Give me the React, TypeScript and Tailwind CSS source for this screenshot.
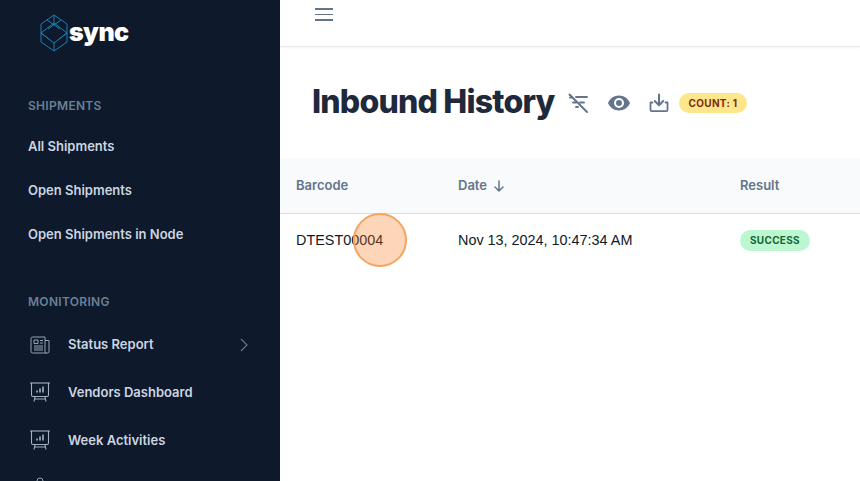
import React from "react";

const Logo = () => (
  <svg width="28" height="38" viewBox="0 0 28 38" fill="none" stroke="#1f7fb0" strokeWidth="1" strokeLinejoin="round">
    <path d="M14 1 L27 10 L27 28 L14 37 L1 28 L1 10 Z" />
    <path d="M14 9 L27 19 L14 29 L1 19 Z" />
    <path d="M14 1 V9 M14 29 V37" />
    <path d="M7 6 L20 15 M21 6 L8 15 M1 19 L9 25 M27 19 L19 25" />
  </svg>
);

const Report = () => (
  <svg width="20" height="18" viewBox="0 0 20 18" fill="none" stroke="#94a3b8" strokeWidth="1" strokeLinejoin="round">
    <path d="M15 1 H2.5 A1.5 1.5 0 0 0 1 2.5 V15.5 A1.5 1.5 0 0 0 2.5 17 H17.5 A1.5 1.5 0 0 0 19 15.5 V4.5 H15 Z" />
    <path d="M15 4.5 V15.5 A1.5 1.5 0 0 0 16.5 17" />
    <rect x="4" y="4" width="4" height="3.5" />
    <path d="M10 4.5 H13 M10 7 H13 M4 10 H13 M4 12 H13 M4 14 H13" />
  </svg>
);

const Presentation = () => (
  <svg width="20" height="20" viewBox="0 0 20 20" fill="none" stroke="#a3b1c4" strokeWidth="1.1" strokeLinejoin="round">
    <path d="M0 1 H20" />
    <path d="M1.5 1 V13 A1.5 1.5 0 0 0 3 14.5 H17 A1.5 1.5 0 0 0 18.5 13 V1" />
    <path d="M7 10.5 V8.5 M10 10.5 V6.5 M13 10.5 V4.5" strokeWidth="1.6" />
    <path d="M5 14.5 L4 19.5 M15 14.5 L16 19.5 M4.5 17 H15.5" />
  </svg>
);

const FilterOff = () => (
  <svg width="22" height="22" viewBox="0 0 22 22" fill="none" stroke="#64748b" strokeWidth="2" strokeLinecap="round">
    <path d="M2.5 2.5 L20 20" />
    <path d="M9 5 H20 M3 5.5 H5 M6 10.5 H9 M13 10.5 H17 M9 15 H11" strokeWidth="1.9" />
  </svg>
);

const Eye = () => (
  <svg width="24" height="24" viewBox="0 0 24 24" fill="#64748b">
    <path
      fillRule="evenodd"
      d="M12 4.5 C7 4.5 2.7 7.6 1 12 c1.7 4.4 6 7.5 11 7.5 s9.3-3.1 11-7.5 C21.3 7.6 17 4.5 12 4.5 Z M12 17 a5 5 0 1 1 0-10 a5 5 0 0 1 0 10 Z M12 9 a3 3 0 1 0 0 6 a3 3 0 0 0 0-6 Z"
    />
  </svg>
);

const Download = () => (
  <svg width="20" height="20" viewBox="0 0 20 20" fill="none" stroke="#64748b" strokeWidth="2" strokeLinecap="round" strokeLinejoin="round">
    <path d="M10 1.5 V12 M5.8 8 L10 12.2 L14.2 8" />
    <path d="M1.5 13 V17 A1.2 1.2 0 0 0 2.7 18.2 H17.3 A1.2 1.2 0 0 0 18.5 17 V13 M1.5 9.5 V13 M18.5 9.5 V13 M1.5 9.5 H3.5 M16.5 9.5 H18.5" strokeWidth="1.8" />
  </svg>
);

const Sidebar = () => (
  <aside className="w-[280px] shrink-0 h-full bg-[#0e192b] overflow-hidden text-[#cbd5e1] text-[13px] font-semibold">
    <div className="h-[86px] pl-[40px] pt-[14px] flex items-start gap-[1px]">
      <Logo />
      <span className="text-white font-black text-[25px] leading-[36px] tracking-[-0.6px]">sync</span>
    </div>
    <div className="h-[39px] pl-7 flex items-center text-xs tracking-wide text-[#6b8096]">SHIPMENTS</div>
    <ul>
      {["All Shipments", "Open Shipments", "Open Shipments in Node"].map((t) => (
        <li key={t} className="h-11 pl-7 flex items-center">{t}</li>
      ))}
    </ul>
    <div className="h-[38px] mt-[26px] pl-7 flex items-center text-xs tracking-wide text-[#6b8096]">MONITORING</div>
    <ul>
      <li className="h-12 pl-[30px] pr-[32px] flex items-center">
        <span className="w-[38px]"><Report /></span>
        <span>Status Report</span>
        <svg className="ml-auto" width="8" height="14" viewBox="0 0 8 14" fill="none" stroke="#64748b" strokeWidth="1.2"><path d="M1 1 L7 7 L1 13" /></svg>
      </li>
      {["Vendors Dashboard", "Week Activities"].map((t) => (
        <li key={t} className="h-12 pl-[30px] flex items-center">
          <span className="w-[38px] -mt-[2px]"><Presentation /></span>
          <span>{t}</span>
        </li>
      ))}
      <li className="h-12 pl-[30px] flex items-start">
        <svg className="mt-[10px]" width="20" height="20" viewBox="0 0 20 20" fill="none" stroke="#94a3b8" strokeWidth="1"><circle cx="10" cy="6" r="3" /><path d="M3 18 C3 13 17 13 17 18" /></svg>
      </li>
    </ul>
  </aside>
);

export default function App() {
  return (
    <div className="relative flex w-[860px] h-[481px] overflow-hidden bg-white font-['Inter',sans-serif]">
      <Sidebar />
      <main className="flex-1 min-w-0 flex flex-col">
        <header className="h-[47px] shrink-0 pl-[35px] pt-[8px] border-b border-[#e5e7eb] shadow-[0_1px_2px_rgba(0,0,0,0.04)]">
          <div className="w-[18px] flex flex-col gap-[4px]">
            <span className="h-[1.5px] bg-[#64748b]" />
            <span className="h-[1.5px] bg-[#64748b]" />
            <span className="h-[1.5px] bg-[#64748b]" />
          </div>
        </header>
        <div className="h-[111px] shrink-0 pl-[32px] pt-[33px] flex items-start">
          <h1 className="text-[32px] leading-[44px] font-extrabold tracking-[-0.8px] text-[#1e293b] whitespace-nowrap">Inbound History</h1>
          <div className="ml-[12px] mt-[11px] flex items-center">
            <span className="w-[22px]"><FilterOff /></span>
            <span className="ml-[18px] w-[24px]"><Eye /></span>
            <span className="ml-[18px] w-[20px]"><Download /></span>
            <span className="ml-[10px] h-[20px] px-[10px] rounded-full bg-[#fde78a] text-[#7c2d12] text-[10px] font-bold tracking-[0.3px] flex items-center whitespace-nowrap">COUNT: 1</span>
          </div>
        </div>
        <div className="h-[56px] shrink-0 bg-[#f8fafc] border-b border-[#d9dee5] flex items-center text-[#64748b] text-[13px] font-semibold">
          <div className="w-[178px] pl-4">Barcode</div>
          <div className="w-[282px] flex items-center gap-[5px]">
            Date
            <svg width="14" height="14" viewBox="0 0 14 14" fill="none" stroke="#64748b" strokeWidth="1.5" strokeLinecap="round" strokeLinejoin="round"><path d="M7 2 V12 M3 8 L7 12 L11 8" /></svg>
          </div>
          <div>Result</div>
        </div>
        <div className="h-[52px] flex items-center text-[14.4px] text-[#111827] font-['Liberation_Sans',sans-serif]">
          <div className="w-[178px] pl-4 pt-[1px]">DTEST00004</div>
          <div className="w-[282px] pt-[1px] whitespace-nowrap">Nov 13, 2024, 10:47:34 AM</div>
          <span className="h-[21px] px-[10px] rounded-full bg-[#bbf7d0] text-[#166534] text-[10px] font-bold tracking-[0.3px] flex items-center font-['Inter',sans-serif]">SUCCESS</span>
        </div>
      </main>
      <div className="absolute left-[353px] top-[213px] w-[54px] h-[54px] rounded-full bg-[#f97316]/30 border-2 border-[#f4a460]" />
    </div>
  );
}
